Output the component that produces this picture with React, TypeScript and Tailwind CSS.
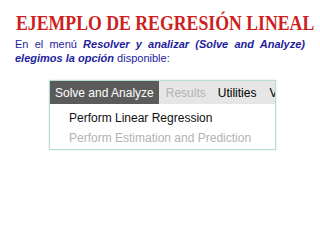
export default function App() {
  return (
    <div className="flex h-[240px] w-[320px] flex-col overflow-hidden bg-white">
      <h1 className="mt-[11px] whitespace-nowrap pl-[16px] font-['Liberation_Serif',serif] text-[21px] font-bold leading-[24px] text-[#cc1f22]">
        <span className="inline-block origin-left scale-x-[0.845]">EJEMPLO DE REGRESIÓN LINEAL</span>
      </h1>
      <p className="mt-[2px] px-[15px] text-justify font-['Liberation_Sans',Arial,sans-serif] text-[11px] leading-[14px] text-[#1d1d9c]">
        En el menú <b><i>Resolver y analizar (Solve and Analyze) elegimos la opción</i></b> disponible:
      </p>
      <div className="ml-[49px] mt-[15px] flex h-[70px] w-[227px] flex-col overflow-hidden border border-[#b9dcd6] bg-white font-['Liberation_Sans',Arial,sans-serif] text-[12px] shadow-[0_0_2px_#cfe6e2]">
        <div className="flex h-[23px] shrink-0 items-center whitespace-nowrap bg-[#e6e6e6]">
          <span className="flex h-full items-center bg-[#5b5b5b] px-[5px] text-white">Solve and Analyze</span>
          <span className="ml-[7px] text-[#b3b3b3]">Results</span>
          <span className="ml-[12px] text-black">Utilities</span>
          <span className="ml-[13px] text-black">View</span>
        </div>
        <div className="flex flex-col whitespace-nowrap pl-[19px] pt-[4px]">
          <span className="leading-[20px] text-[#111]">Perform Linear Regression</span>
          <span className="leading-[20px] text-[#b3b3b3]">Perform Estimation and Prediction</span>
        </div>
      </div>
    </div>
  );
}
